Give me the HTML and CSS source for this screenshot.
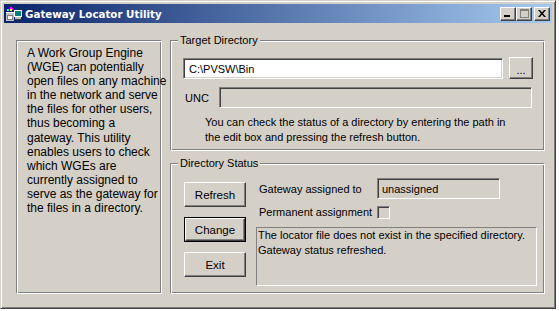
FILE: index.html
```html
<!DOCTYPE html>
<html>
<head>
<meta charset="utf-8">
<link rel="stylesheet" href="styles.css">
</head>
<body>
<div class="window">
  <div class="titlebar">
    <svg class="app-icon" width="16" height="14" viewBox="0 0 16 14">
      <rect x="0" y="5" width="8" height="9" fill="#c0c0c0"/>
      <rect x="0" y="5" width="8" height="1" fill="#fff"/>
      <rect x="1" y="0" width="2" height="2" fill="#0000ff"/>
      <rect x="4" y="0" width="2" height="2" fill="#ff00ff"/>
      <rect x="1" y="2" width="2" height="2" fill="#00ffff"/>
      <rect x="4" y="2" width="2" height="2" fill="#ffff00"/>
      <rect x="6" y="1" width="1" height="2" fill="#ff00ff"/>
      <rect x="1" y="8" width="6" height="5" fill="#808080"/>
      <rect x="2" y="9" width="4" height="3" fill="#fff"/>
      <rect x="8" y="3" width="8" height="7" fill="#fff"/>
      <rect x="9" y="4" width="6" height="5" fill="#008080"/>
      <rect x="9" y="10" width="6" height="3" fill="#c0c0c0"/>
      <rect x="9" y="12" width="6" height="1" fill="#404040"/>
    </svg>
    <span class="title">Gateway Locator Utility</span>
    <div class="controls">
      <div class="cbtn"><svg width="8" height="7" viewBox="0 0 8 7"><rect x="0" y="5" width="6" height="2" fill="#000"/></svg></div>
      <div class="cbtn"><svg width="9" height="9" viewBox="0 0 9 9"><rect x="0.5" y="0.5" width="8" height="8" fill="none" stroke="#808080"/><rect x="0" y="0" width="9" height="2" fill="#808080"/></svg></div>
      <div class="cbtn close"><svg width="8" height="7" viewBox="0 0 8 7"><path d="M0 0h2l2 2.5 2-2.5h2l-3 3.5 3 3.5h-2l-2-2.5-2 2.5h-2l3-3.5z" fill="#000"/></svg></div>
    </div>
  </div>
  <div class="client">
    <div class="info etched">A Work Group Engine<br>(WGE) can potentially<br>open files on any machine<br>in the network and serve<br>the files for other users,<br>thus becoming a<br>gateway. This utility<br>enables users to check<br>which WGEs are<br>currently assigned to<br>serve as the gateway for<br>the files in a directory.</div>
    <div class="groups">
      <div class="group etched target">
        <span class="legend">Target Directory</span>
        <div class="row path-row">
          <div class="edit path">C:\PVSW\Bin</div>
          <div class="btn browse">...</div>
        </div>
        <div class="row unc-row">
          <span class="unc-label">UNC</span>
          <div class="edit disabled unc"></div>
        </div>
        <p class="help">You can check the status of a directory by entering the path in<br>the edit box and pressing the refresh button.</p>
      </div>
      <div class="group etched status">
        <span class="legend">Directory Status</span>
        <div class="buttons">
          <div class="btn action">Refresh</div>
          <div class="btn action default"><div class="btn-inner">Change</div></div>
          <div class="btn action">Exit</div>
        </div>
        <div class="details">
          <div class="row field-row">
            <span class="field-label">Gateway assigned to</span>
            <div class="edit disabled gateway">unassigned</div>
          </div>
          <div class="row check-row">
            <span class="field-label">Permanent assignment</span>
            <div class="checkbox"></div>
          </div>
          <div class="message">The locator file does not exist in the specified directory.<br>Gateway status refreshed.</div>
        </div>
      </div>
    </div>
  </div>
</div>
</body>
</html>
```

FILE: styles.css
```css
* { box-sizing: border-box; }
html, body { margin: 0; padding: 0; }
body {
  background: #ffffff;
  font-family: "Liberation Sans", Arial, sans-serif;
  font-size: 11px;
  color: #000;
  width: 559px;
  height: 311px;
  overflow: hidden;
}
.window {
  width: 556px;
  height: 309px;
  background: #d4d0c8;
  border: 1px solid;
  border-color: #d4d0c8 #404040 #404040 #d4d0c8;
  box-shadow: inset 1px 1px #ffffff, inset -1px -1px #808080;
  padding: 3px;
  display: flex;
  flex-direction: column;
}
.titlebar {
  height: 19px;
  background: linear-gradient(to right, #0a246a, #a6caf0);
  display: flex;
  align-items: center;
  padding-left: 2px;
  padding-right: 2px;
  flex-shrink: 0;
}
.app-icon { display: block; margin-right: 3px; margin-top: 1px; }
.title {
  color: #fff;
  font-weight: bold;
  font-size: 10.3px;
  font-family: "DejaVu Sans", Tahoma, sans-serif;
}
.controls { margin-left: auto; display: flex; }
.cbtn {
  width: 16px;
  height: 14px;
  background: #d4d0c8;
  border: 1px solid;
  border-color: #fff #404040 #404040 #fff;
  box-shadow: inset -1px -1px #808080;
  display: flex;
  align-items: center;
  justify-content: center;
}
.cbtn svg { display: block; }
.cbtn.close { margin-left: 2px; }
.client {
  flex: 1;
  display: flex;
  padding: 17px 7px 0 12px;
  gap: 8px;
}
.etched {
  border: 1px solid;
  border-color: #808080 #ffffff #ffffff #808080;
  box-shadow: inset 1px 1px #ffffff, inset -1px -1px #808080;
}
.info {
  width: 146px;
  height: 254px;
  padding: 5px 6px 0 10px;
  font-size: 12px;
  line-height: 14.1px;
  white-space: nowrap;
  color: #000;
}
.groups { display: flex; flex-direction: column; gap: 12px; width: 375px; }
.group { position: relative; }
.legend {
  position: absolute;
  top: -8px;
  left: 7px;
  padding: 0 2px;
  background: #d4d0c8;
  line-height: 15px;
}
.target { height: 111px; padding: 16px 0 0 12px; }
.status { height: 131px; padding: 18px 0 0 13px; display: flex; }
.row { display: flex; align-items: center; }
.edit {
  height: 21px;
  background: #fff;
  border: 1px solid;
  border-color: #808080 #ffffff #ffffff #808080;
  box-shadow: inset 1px 1px #404040, inset -1px -1px #d4d0c8;
  padding: 3px 0 0 5px;
  line-height: 14px;
  white-space: nowrap;
}
.edit.disabled { background: #d4d0c8; }
.path { width: 320px; }
.btn {
  background: #d4d0c8;
  border: 1px solid;
  border-color: #fff #404040 #404040 #fff;
  box-shadow: inset -1px -1px #808080;
  display: flex;
  align-items: center;
  justify-content: center;
}
.browse { width: 24px; height: 22px; margin-left: 6px; padding-top: 3px; }
.unc-row { margin-top: 8px; }
.unc-label { width: 36px; padding-left: 2px; }
.unc { width: 313px; }
.help { margin: 7px 0 0 22px; line-height: 15px; white-space: nowrap; }
.buttons { display: flex; flex-direction: column; gap: 10px; width: 62px; }
.action { width: 62px; height: 25px; font-size: 11.5px; }
.btn.default {
  border: 1px solid #000;
  box-shadow: none;
  padding: 0;
}
.btn-inner {
  width: 100%;
  height: 100%;
  border: 1px solid;
  border-color: #fff #404040 #404040 #fff;
  box-shadow: inset -1px -1px #808080;
  display: flex;
  align-items: center;
  justify-content: center;
}
.details { margin-left: 10px; margin-top: -4px; display: flex; flex-direction: column; }
.field-label { width: 121px; padding-left: 3px; white-space: nowrap; }
.field-row { height: 21px; }
.gateway { width: 123px; padding-left: 4px; }
.check-row { margin-top: 6px; height: 14px; }
.checkbox {
  width: 13px;
  height: 13px;
  border: 1px solid;
  border-color: #808080 #ffffff #ffffff #808080;
  box-shadow: inset 1px 1px #404040, inset -1px -1px #d4d0c8;
}
.message {
  margin-top: 8px;
  width: 281px;
  height: 59px;
  border: 1px solid;
  border-color: #808080 #ffffff #ffffff #808080;
  padding: 0 0 0 1px;
  line-height: 15px;
  white-space: nowrap;
}
```
